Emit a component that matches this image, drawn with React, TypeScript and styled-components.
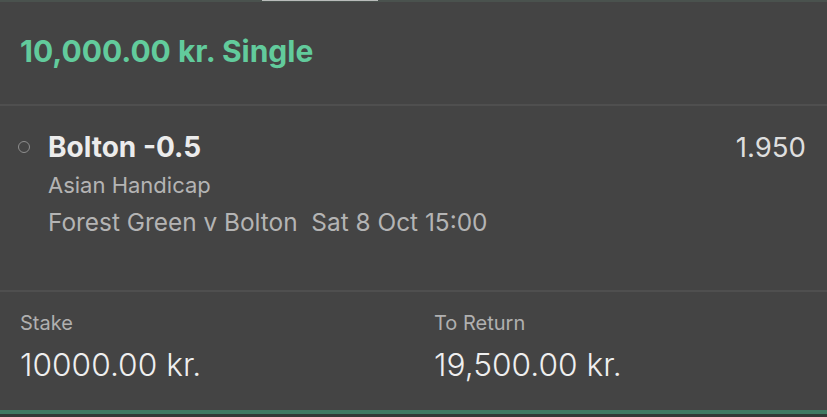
import React from 'react'
import styled, { createGlobalStyle } from 'styled-components'

const GlobalStyle = createGlobalStyle`
  html, body {
    margin: 0;
    padding: 0;
    background: #444444;
  }
  body {
    font-family: Inter, 'Noto Sans', sans-serif;
    -webkit-font-smoothing: antialiased;
  }
`

const Slip = styled.div`
  width: 827px;
  height: 417px;
  background: #444444;
  display: flex;
  flex-direction: column;
  overflow: hidden;
`

const TopEdge = styled.div`
  height: 2px;
  flex: 0 0 auto;
  background: #4a524e;
  display: flex;
  padding-left: 262px;
`

const Handle = styled.div`
  width: 116px;
  height: 1px;
  background: #b9bcba;
`

const Header = styled.div`
  height: 104px;
  flex: 0 0 auto;
  padding: 29px 20px 0;
  box-sizing: border-box;
  border-bottom: 2px solid #4f4f4f;
`

const Title = styled.h1`
  margin: 0;
  font-size: 30px;
  line-height: 40px;
  font-weight: 700;
  color: #62cb9c;
`

const Selection = styled.div`
  height: 186px;
  flex: 0 0 auto;
  display: grid;
  grid-template-columns: 30px 1fr auto;
  align-content: start;
  padding: 24px 21px 0 18px;
  box-sizing: border-box;
  border-bottom: 2px solid #4f4f4f;
`

const Dot = styled.span`
  width: 12px;
  height: 12px;
  margin-top: 11px;
  border-radius: 50%;
  border: 1.5px solid #8e8e8e;
  box-sizing: border-box;
`

const Details = styled.div`
  display: flex;
  flex-direction: column;
`

const Pick = styled.div`
  font-size: 28px;
  font-weight: 700;
  color: #ececec;
  line-height: 34px;
`

const Meta = styled.div<{ size: number; gap: number }>`
  margin-top: ${(p) => p.gap}px;
  font-size: ${(p) => p.size}px;
  color: #b4b4b4;
  line-height: 30px;
  white-space: pre;
`

const Odds = styled.div`
  font-size: 27.6px;
  color: #dedede;
  line-height: 34px;
`

const Footer = styled.div`
  height: 118px;
  flex: 0 0 auto;
  display: grid;
  grid-template-columns: 414px 1fr;
  padding: 19px 20px 0;
  box-sizing: border-box;
`

const Field = styled.div`
  display: flex;
  flex-direction: column;
  gap: 10px;
`

const Label = styled.div`
  font-size: 20px;
  line-height: 24px;
  color: #b0b0b0;
`

const Amount = styled.div`
  font-size: 31.7px;
  line-height: 40px;
  font-weight: 300;
  color: #efefef;
`

const BottomBar = styled.div`
  height: 4px;
  flex: 0 0 auto;
  background: #3f7a62;
  border-bottom: 3px solid #323a36;
`

export default function App() {
  return (
    <>
      <GlobalStyle />
      <Slip>
        <TopEdge>
          <Handle />
        </TopEdge>
        <Header>
          <Title>10,000.00 kr. Single</Title>
        </Header>
        <Selection>
          <Dot />
          <Details>
            <Pick>Bolton -0.5</Pick>
            <Meta size={22} gap={6}>Asian Handicap</Meta>
            <Meta size={24.4} gap={7}>{'Forest Green v Bolton  Sat 8 Oct 15:00'}</Meta>
          </Details>
          <Odds>1.950</Odds>
        </Selection>
        <Footer>
          <Field>
            <Label>Stake</Label>
            <Amount>10000.00 kr.</Amount>
          </Field>
          <Field>
            <Label>To Return</Label>
            <Amount>19,500.00 kr.</Amount>
          </Field>
        </Footer>
        <BottomBar />
      </Slip>
    </>
  )
}
